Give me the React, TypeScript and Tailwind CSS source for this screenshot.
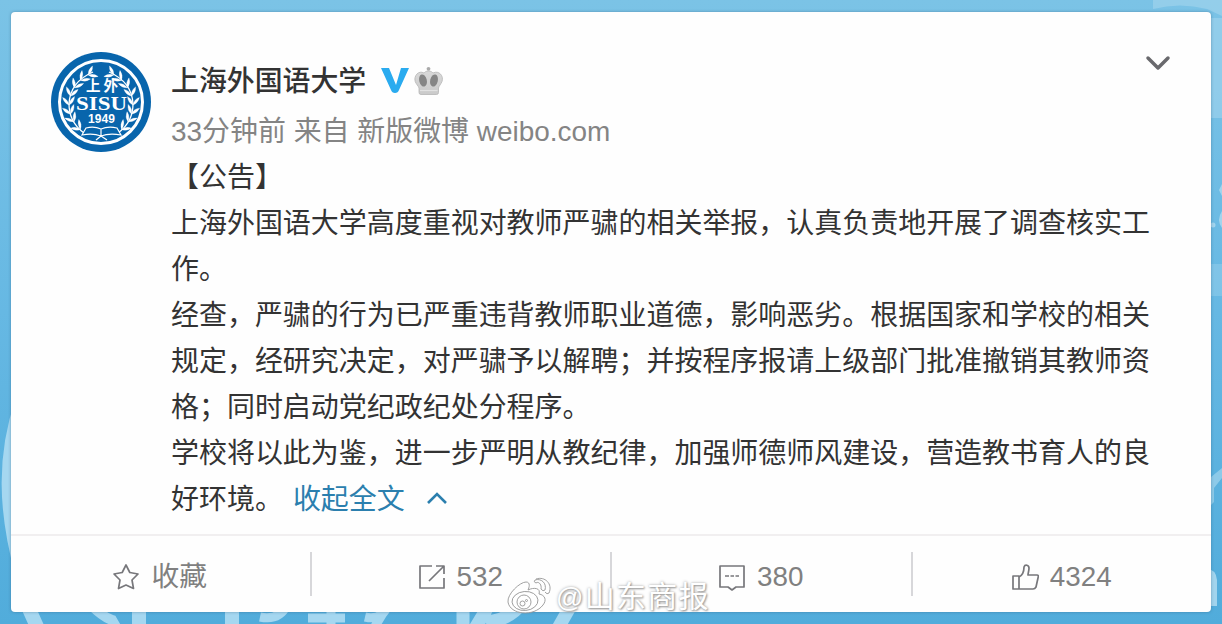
import type { ReactNode } from "react";

// \uff0c and \uff1b are the full-width comma and semicolon
const PARAGRAPHS = [
  ["【公告】"],
  ["上海外国语大学高度重视对教师严骕的相关举报\uff0c认真负责地开展了调查核实工", "作。"],
  [
    "经查\uff0c严骕的行为已严重违背教师职业道德\uff0c影响恶劣。根据国家和学校的相关",
    "规定\uff0c经研究决定\uff0c对严骕予以解聘\uff1b并按程序报请上级部门批准撤销其教师资",
    "格\uff1b同时启动党纪政纪处分程序。",
  ],
  ["学校将以此为鉴\uff0c进一步严明从教纪律\uff0c加强师德师风建设\uff0c营造教书育人的良"],
];

// Leaf pairs along one side of the laurel, from top to bottom
const LEAVES = [
  { x: 39, y: 22, r: 62 },
  { x: 31, y: 27, r: 45 },
  { x: 24.5, y: 34, r: 28 },
  { x: 20, y: 42, r: 12 },
  { x: 18, y: 51, r: -4 },
  { x: 19, y: 60, r: -18 },
  { x: 22, y: 68, r: -32 },
  { x: 28, y: 76, r: -46 },
];

function Laurel() {
  return (
    <g stroke="#fff" fill="#fff">
      <path d="M42 20Q19 30 18 52Q18 70 33 81" fill="none" strokeWidth="1.3" />
      {LEAVES.map((l) => (
        <g key={l.y} transform={`translate(${l.x} ${l.y}) rotate(${l.r})`} strokeWidth=".3">
          <path d="M0 2Q-5 0-6-6Q-1-4 0 2Z" />
          <path d="M0 2Q5 0 6-6Q1-4 0 2Z" />
        </g>
      ))}
    </g>
  );
}

function Avatar() {
  return (
    <svg viewBox="0 0 100 100" className="h-[100px] w-[100px] shrink-0">
      <circle cx="50" cy="50" r="50" fill="#0865ac" />
      <circle cx="50" cy="50" r="41.5" fill="none" stroke="#fff" strokeWidth="3" />
      <Laurel />
      <g transform="matrix(-1 0 0 1 100 0)">
        <Laurel />
      </g>
      <g fill="#fff" textAnchor="middle">
        <text x="52.5" y="39" fontSize="14.5" fontWeight="700" letterSpacing="3" fontFamily="Noto Sans CJK SC, sans-serif">上外</text>
        <text x="50.5" y="58" fontSize="18" fontWeight="700" textLength="51" lengthAdjust="spacingAndGlyphs" fontFamily="Liberation Serif, serif">SISU</text>
        <text x="50.5" y="71" fontSize="12" fontWeight="700" textLength="27" fontFamily="Liberation Sans, sans-serif">1949</text>
      </g>
      <path d="M35 76Q43 74 50 77Q57 74 66 76L70 83Q58 81 50 84Q42 81 31 83ZM50 77V84" fill="#0865ac" stroke="#fff" strokeWidth="1.2" />
      <path d="M45 88L50 84L56 88" fill="none" stroke="#fff" strokeWidth="1.3" />
    </svg>
  );
}

function Crown() {
  return (
    <svg viewBox="0 0 30 30" className="ml-[5px] h-[30px] w-[30px]">
      <defs>
        <linearGradient id="crown" x1="0" y1="0" x2="0" y2="1">
          <stop offset="0" stopColor="#d9d9d9" />
          <stop offset="1" stopColor="#cacaca" />
        </linearGradient>
      </defs>
      <circle cx="14.5" cy="2.8" r="1.9" fill="#aaa" />
      <path d="M14.5 5C17 5 18 6 19 7C25 4 30 10 28 15.500C27 18 25 20 24.500 22V26.500Q24.500 28.500 22.500 28.500H7Q5 28.500 5 26.500V22C4.500 20 2 18 1.200 15.500C-.500 10 4.500 4 10 7C11 6 12 5 14.500 5Z" fill="url(#crown)" stroke="#b5b5b5" strokeWidth=".8" />
      <ellipse cx="9" cy="14.5" rx="3.8" ry="6.2" transform="rotate(-14 9 14.5)" fill="#858585" />
      <ellipse cx="20" cy="14.5" rx="3.8" ry="6.2" transform="rotate(14 20 14.5)" fill="#858585" />
      <path d="M6 24.500H23.500" stroke="#e2e2e2" strokeWidth="1.2" />
    </svg>
  );
}

function Backdrop() {
  return (
    <svg viewBox="0 0 1222 624" className="absolute inset-0 h-full w-full">
      <defs>
        <linearGradient id="sky" x1="0" y1="0" x2="0" y2="1">
          <stop offset="0" stopColor="#7bc3e6" />
          <stop offset=".5" stopColor="#66b8e3" />
          <stop offset="1" stopColor="#51acdb" />
        </linearGradient>
      </defs>
      <rect width="1222" height="624" fill="url(#sky)" />
      <g fill="none" stroke="#a5d7f0">
        <path d="M22 400C3 455 4 510 22 575" strokeWidth="13" />
        <path d="M25 600L43 640M139 600V640M232 600V640" strokeWidth="14" />
        <path d="M91 605Q103 617 112 620L119 632" strokeWidth="10" />
        <path d="M260 617Q279 621 287 605M308 618H345M331 605V635M365 617Q382 621 388 605L374 628" strokeWidth="9" />
        <path d="M463 607V640M492 600L474 630M523 602Q510 620 486 622M574 600L557 630" strokeWidth="13" />
      </g>
      <g fill="#a2d4ed">
        <path d="M1153 0H1222V16L1207 9Q1180 2 1153 9Z" opacity=".65" />
        <path d="M1205 18H1222V118H1205Z" opacity=".6" />
        <path d="M1205 264H1222V296H1205Z" opacity=".4" />
        <path d="M1205 482L1222 468V478L1214 488V502L1205 511Z" opacity=".7" />
        <path d="M1205 569Q1216 568 1217 580V606H1210V585H1205Z" />
        <circle cx="1213" cy="225" r="2.5" />
        <path d="M1222 211Q1216 220 1222 228ZM1222 184L1219 190L1222 196Z" />
      </g>
    </svg>
  );
}

function Action({ icon, label, last = false }: { icon: ReactNode; label: string; last?: boolean }) {
  return (
    <div className={`flex h-11 flex-1 items-center justify-center gap-[11px] pr-px pt-1.5 ${last ? "" : "border-r-2 border-[#d7d7da]"}`}>
      <svg viewBox="0 0 28 28" className="h-7 w-7" fill="none" stroke="#77777b" strokeWidth="1.7" strokeLinejoin="round">
        {icon}
      </svg>
      <span className="text-[27.8px] leading-[38px]">{label}</span>
    </div>
  );
}

function Watermark() {
  return (
    <div className="absolute left-[507px] top-[574px] flex items-center">
      <svg viewBox="0 0 46 38" className="h-[38px] w-[46px]" fill="#fff" fillOpacity=".8" stroke="#969696" strokeWidth=".9">
        <path d="M1 25C0 17 13 5 19 5C24 5 22 11 21 13C27 10 34 11 32 17C38 18 40 23 36 28C27 40 3 38 1 25Z" />
        <ellipse cx="18" cy="24" rx="13" ry="9.5" transform="rotate(-5 18 24)" />
        <circle cx="17" cy="25" r="7" />
        <circle cx="15.5" cy="26.5" r="2.5" />
        <circle cx="19.5" cy="23.5" r="1" />
        <path d="M29 6C31 4 35 7 34 12Q36 15 38 13C40 6 34 1 28 3Q26 5 29 6ZM29 2C38-1 46 7 42 16Q40 18 38 15" />
      </svg>
      <span className="ml-[3px] mt-1 text-[30px] leading-[38px] tracking-[1.3px] text-white [text-shadow:1px_1px_2px_#999,0_0_3px_#aaa]">
        <span className="text-[27px]">@</span>山东商报
      </span>
    </div>
  );
}

export default function App() {
  return (
    <div className="relative h-[624px] w-[1222px] overflow-hidden font-['Liberation_Sans','Noto_Sans_CJK_SC',sans-serif]" lang="zh-CN">
      <Backdrop />
      <div className="relative px-[11px] py-3">
        <article className="flex h-[600px] w-[1200px] flex-col rounded bg-[#fefefe] shadow-[0_0_3px_rgba(50,90,120,0.5)]">
          <div className="flex h-[522px] pl-10 pt-10">
            <Avatar />
            <div className="ml-5 flex-1">
              <header className="flex h-[57px] items-center">
                <h1 className="whitespace-nowrap pt-[3px] text-[27.9px] font-medium leading-[56px] text-[#333]">上海外国语大学</h1>
                <svg viewBox="0 0 28 25" className="ml-[15px] h-[25px] w-7">
                  <path d="M0 0H8L15 17L20 0H28L18 22Q17 25 14 25Q11 25 10 22Z" fill="#2aabef" />
                </svg>
                <Crown />
                <svg viewBox="0 0 26 16" className="-mt-9 ml-auto mr-10 h-4 w-[26px]" fill="none" stroke="#69696d" strokeWidth="3.5" strokeLinecap="round" strokeLinejoin="round">
                  <path d="M3 3L13 13L23 3" />
                </svg>
              </header>
              <p className="h-[46px] whitespace-nowrap text-[27.95px] leading-[46px] text-[#848484]">33分钟前 来自 新版微博 weibo.com</p>
              <div className="whitespace-nowrap text-[27.97px] leading-[46px] text-[#333]">
                {PARAGRAPHS.map((lines) => (
                  <div key={lines[0]}>
                    {lines.map((line) => (
                      <p key={line}>{line}</p>
                    ))}
                  </div>
                ))}
                <div className="flex items-center">
                  <span>好环境。</span>
                  <a className="ml-[10px] flex items-center text-[#2b7fae]">
                    收起全文
                    <svg viewBox="0 0 20 14" className="-mt-1 ml-[22px] h-[14px] w-5" fill="none" stroke="#2b7fae" strokeWidth="2.6">
                      <path d="M1 12L10 3L19 12" />
                    </svg>
                  </a>
                </div>
              </div>
            </div>
          </div>
          <footer className="flex h-[78px] items-center border-t-2 border-[#f1eff0] text-[#808080]">
            <Action label="收藏" icon={<path d="M14 2L17.800 9.500L26 11L20 17L21.500 25.500L14 22L6.500 25.500L8 17L2 11L10.200 9.500Z" />} />
            <Action label="532" icon={<path d="M14 3H2V25H26V15M11 18L26 3M18 3H26V11" />} />
            <Action label="380" icon={<><path d="M2 3H26V24H18L14 27L10 24H2Z" /><path d="M7 13H11M12.500 13H16M17.500 13H21" /></>} />
            <Action last label="4324" icon={<path d="M2 13H8V26H2ZM8 14C12 12 13 8 13 4C14 1 18 2 18 5C18 8 17 10 17 12H26Q28 12 27 15L25 24Q24 26 22 26H8" />} />
          </footer>
        </article>
      </div>
      <Watermark />
    </div>
  );
}
